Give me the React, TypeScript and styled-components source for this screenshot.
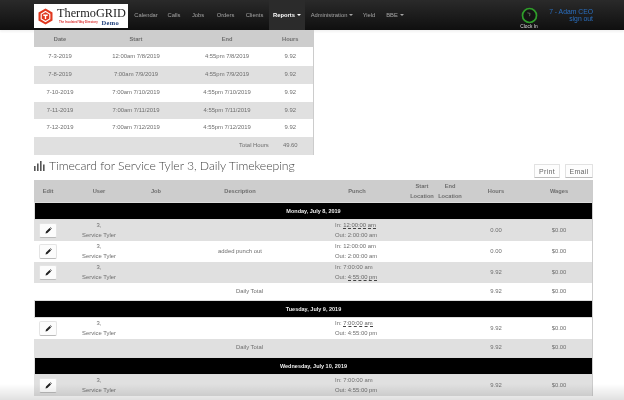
import React from "react";
import styled, { createGlobalStyle } from "styled-components";

const GlobalStyle = createGlobalStyle`
  html, body {
    margin: 0;
    padding: 0;
    height: 100%;
    background: #fff;
    overflow: hidden;
  }
  body {
    font-family: "Liberation Sans", Arial, sans-serif;
    font-size: 6px;
    color: #6e6e6e;
  }
`;

const Page = styled.div`
  position: relative;
  width: 624px;
  height: 400px;
  overflow: hidden;
  filter: blur(0.4px);
`;

// ---------- top bar ----------
const NavBar = styled.header`
  display: flex;
  align-items: stretch;
  height: 30px;
  padding-left: 34px;
  background: linear-gradient(#2a2a2a, #0f0f0f);
  box-shadow: 0 2px 2px rgba(0, 0, 0, 0.05);
`;

const Logo = styled.div`
  display: flex;
  align-items: center;
  gap: 4px;
  width: 94px;
  height: 24px;
  margin-top: 4px;
  padding-left: 4px;
  box-sizing: border-box;
  background: #fff;
`;

const LogoText = styled.div`
  display: flex;
  flex-direction: column;
  width: 66px;
  margin-top: 1px;
`;

const LogoName = styled.span`
  font-family: "Liberation Serif", serif;
  font-size: 12.3px;
  line-height: 12px;
  color: #222;
`;

const LogoSub = styled.div`
  display: flex;
  align-items: center;
  justify-content: space-between;
  padding: 0 4px 0 2px;
  font-size: 2.9px;
  font-weight: bold;
  white-space: nowrap;
  color: #d33;
  line-height: 7px;
`;

const LogoDemo = styled.span`
  font-family: "Liberation Serif", serif;
  font-size: 6.5px;
  font-weight: bold;
  letter-spacing: 0.3px;
  color: #1f3f7a;
`;

const NavLinks = styled.nav`
  display: flex;
  align-items: stretch;
  margin-left: 1px;
`;

const NavLink = styled.a<{ $active?: boolean; $w: number }>`
  display: flex;
  align-items: center;
  justify-content: center;
  width: ${(p) => p.$w}px;
  font-size: 5.8px;
  font-weight: ${(p) => (p.$active ? "bold" : "normal")};
  color: ${(p) => (p.$active ? "#fff" : "#a5a5a5")};
  background: ${(p) => (p.$active ? "#2b2b2b" : "transparent")};
`;

const Caret = styled.span`
  display: inline-block;
  margin-left: 2px;
  border-top: 2px solid currentColor;
  border-left: 2px solid transparent;
  border-right: 2px solid transparent;
`;

const ClockIn = styled.div`
  display: flex;
  flex-direction: column;
  align-items: center;
  width: 24px;
  margin-left: auto;
  padding-top: 7px;
  box-sizing: border-box;
`;

const ClockLabel = styled.span`
  font-size: 4.8px;
  line-height: 5px;
  margin-top: 0;
  white-space: nowrap;
  color: #ddd;
`;

const UserBox = styled.div`
  width: 52px;
  margin-right: 31px;
  padding-top: 9px;
  box-sizing: border-box;
  text-align: right;
  font-size: 6.8px;
  line-height: 6.5px;
  color: #2a6fc0;
`;

// ---------- tables ----------
const Main = styled.main`
  padding: 0 32px 0 34px;
`;

const HoursTable = styled.table`
  width: 279px;
  table-layout: fixed;
  border-collapse: collapse;
  border-right: 1px solid #ccc;
`;

const Row = styled.tr<{ $shade?: "head" | "odd" }>`
  background: ${(p) =>
    p.$shade === "head" ? "#cdcdcd" : p.$shade === "odd" ? "#e0e0e0" : "#fff"};
`;

const HeadCell = styled.th<{ $h: number }>`
  height: ${(p) => p.$h}px;
  padding: 0;
  font-size: 5.7px;
  font-weight: bold;
  line-height: 10px;
  text-align: center;
  color: #6e6e6e;
`;

const Cell = styled.td<{ $h: number; $align?: string }>`
  height: ${(p) => p.$h}px;
  padding: 0;
  font-size: 5.9px;
  line-height: 9.5px;
  text-align: ${(p) => p.$align ?? "center"};
  color: #6e6e6e;
`;

const OffsetLabel = styled(Cell)<{ $indent: number }>`
  padding-left: ${(p) => p.$indent}px;
  white-space: nowrap;
`;

const TitleRow = styled.div`
  display: flex;
  align-items: flex-end;
  justify-content: space-between;
  height: 25px;
`;

const Title = styled.h2`
  display: flex;
  align-items: center;
  gap: 3px;
  margin: 0 0 8px;
  font-family: Lato, sans-serif;
  font-size: 12.2px;
  font-weight: 300;
  line-height: 12px;
  letter-spacing: -0.04px;
  color: #444;
`;

const Actions = styled.div`
  display: flex;
  gap: 5px;
  margin-bottom: 2px;
  margin-right: -1px;
`;

const ActionButton = styled.button<{ $w: number }>`
  width: ${(p) => p.$w}px;
  height: 14px;
  padding: 0;
  font-family: inherit;
  font-size: 7px;
  letter-spacing: 0.3px;
  color: #666;
  background: #fdfdfd;
  border: 1px solid #e2e2e2;
  border-bottom-color: #bbb;
  border-radius: 1px;
`;

const TimeTable = styled.table`
  width: 558px;
  table-layout: fixed;
  border-collapse: separate;
  border-spacing: 0;
  border-right: 1px solid #ccc;
`;

const DayBand = styled.td<{ $h: number }>`
  height: ${(p) => p.$h}px;
  padding: 0;
  font-size: 5.5px;
  font-weight: bold;
  text-align: center;
  color: #eee;
  background: #000;
  border: 1px solid #ddd;
  border-width: 1px 0 1px 1px;
  box-sizing: border-box;
`;

const EditButton = styled.button`
  display: flex;
  align-items: center;
  justify-content: center;
  width: 18px;
  height: 15px;
  margin: 0 auto 0 5px;
  padding: 0;
  background: #fcfcfc;
  border: 1px solid #e4e4e4;
  border-bottom-color: #bbb;
  border-radius: 2px;
`;

const PunchCell = styled(Cell)`
  padding-left: 31px;
`;

const Dotted = styled.span`
  border-bottom: 1px dashed #444;
  color: #666;
`;

const Fade = styled.div`
  position: absolute;
  left: 0;
  right: 0;
  bottom: 0;
  height: 16px;
  background: linear-gradient(rgba(0, 0, 0, 0), rgba(0, 0, 0, 0.12));
  pointer-events: none;
`;

// ---------- icons ----------
const LogoMark = () => (
  <svg width="15" height="17" viewBox="0 0 15 17">
    <path d="M7.5 0.5 L14.5 4.5 V12.5 L7.5 16.5 L0.5 12.5 V4.5 Z" fill="#e0381f" />
    <path d="M7.5 3.5 L11.8 6 V11 L7.5 13.5 L3.2 11 V6 Z" fill="none" stroke="#fff" strokeWidth="1.1" />
    <path d="M5.3 6.6 H9.7 V7.9 H8.2 V11 H6.8 V7.9 H5.3 Z" fill="#fff" />
  </svg>
);

const ClockIcon = () => (
  <svg width="17" height="17" viewBox="0 0 17 17">
    <circle cx="8.5" cy="8.5" r="7" fill="#141414" stroke="#2f9e2a" strokeWidth="1.7" />
    <path d="M8.5 9.2 L9.1 6.4 M9 6.4 L6.4 5.8" fill="none" stroke="#8a9a8a" strokeWidth="0.6" />
  </svg>
);

const BarsIcon = () => (
  <svg width="12" height="10" viewBox="0 0 12 10">
    <g fill="#555">
      <rect x="0" y="5" width="1.6" height="5" />
      <rect x="3" y="2.5" width="1.6" height="7.5" />
      <rect x="6" y="0" width="1.6" height="10" />
      <rect x="9" y="3.5" width="1.6" height="6.5" />
    </g>
  </svg>
);

const PencilIcon = () => (
  <svg width="7" height="7" viewBox="0 0 7 7">
    <path d="M0.5 6.5 L1 4.6 L4.6 1 L6 2.4 L2.4 6 Z M5 0.6 L5.5 0.2 L6.8 1.5 L6.4 2" fill="#222" />
  </svg>
);

// ---------- data ----------
const navItems = [
  { label: "Calendar", w: 34 },
  { label: "Calls", w: 22 },
  { label: "Jobs", w: 26 },
  { label: "Orders", w: 29 },
  { label: "Clients", w: 29 },
  { label: "Reports", w: 36, active: true, caret: true },
  { label: "Administration", w: 54, caret: true },
  { label: "Yield", w: 20 },
  { label: "BBE", w: 32, caret: true },
];

const hoursRows = [
  { h: 19, cells: ["7-3-2019", "12:00am 7/8/2019", "4:55pm 7/8/2019", "9.92"] },
  { h: 18, cells: ["7-8-2019", "7:00am 7/9/2019", "4:55pm 7/9/2019", "9.92"] },
  { h: 18, cells: ["7-10-2019", "7:00am 7/10/2019", "4:55pm 7/10/2019", "9.92"] },
  { h: 17, cells: ["7-11-2019", "7:00am 7/11/2019", "4:55pm 7/11/2019", "9.92"] },
  { h: 18, cells: ["7-12-2019", "7:00am 7/12/2019", "4:55pm 7/12/2019", "9.92"] },
];

const hoursCols = [52, 100, 82, 45];
const timeCols = [28, 74, 40, 128, 106, 24, 32, 60, 66];

type Entry =
  | { kind: "day"; label: string; h: number }
  | { kind: "total"; odd?: boolean; hours: string; h: number }
  | { kind: "punch"; odd?: boolean; note?: string; inTime: string; outTime: string; inDash?: boolean; outDash?: boolean; hours: string; h: number };

const entries: Entry[] = [
  { kind: "day", label: "Monday, July 8, 2019", h: 18 },
  { kind: "punch", odd: true, inTime: "12:00:00 am", outTime: "2:00:00 am", inDash: true, hours: "0.00", h: 21 },
  { kind: "punch", note: "added punch out", inTime: "12:00:00 am", outTime: "2:00:00 am", hours: "0.00", h: 21 },
  { kind: "punch", odd: true, inTime: "7:00:00 am", outTime: "4:55:00 pm", outDash: true, hours: "9.92", h: 21 },
  { kind: "total", hours: "9.92", h: 17 },
  { kind: "day", label: "Tuesday, July 9, 2019", h: 18 },
  { kind: "punch", inTime: "7:00:00 am", outTime: "4:55:00 pm", inDash: true, hours: "9.92", h: 21 },
  { kind: "total", odd: true, hours: "9.92", h: 18 },
  { kind: "day", label: "Wednesday, July 10, 2019", h: 18 },
  { kind: "punch", odd: true, inTime: "7:00:00 am", outTime: "4:55:00 pm", hours: "9.92", h: 21 },
];

const Cols = ({ widths }: { widths: number[] }) => (
  <colgroup>
    {widths.map((w, i) => (
      <col key={i} width={w} />
    ))}
  </colgroup>
);

const App: React.FC = () => (
  <Page>
    <GlobalStyle />
    <NavBar>
      <Logo>
        <LogoMark />
        <LogoText>
          <LogoName>ThermoGRID</LogoName>
          <LogoSub>
            <span>The Insulated Way Directory</span>
            <LogoDemo>Demo</LogoDemo>
          </LogoSub>
        </LogoText>
      </Logo>
      <NavLinks>
        {navItems.map((n) => (
          <NavLink key={n.label} $w={n.w} $active={n.active}>
            {n.label}
            {n.caret && <Caret />}
          </NavLink>
        ))}
      </NavLinks>
      <ClockIn>
        <ClockIcon />
        <ClockLabel>Clock In</ClockLabel>
      </ClockIn>
      <UserBox>
        7 - Adam CEO
        <br />
        sign out
      </UserBox>
    </NavBar>

    <Main>
      <HoursTable>
        <Cols widths={hoursCols} />
        <thead>
          <Row $shade="head">
            <HeadCell $h={17}>Date</HeadCell>
            <HeadCell $h={17}>Start</HeadCell>
            <HeadCell $h={17}>End</HeadCell>
            <HeadCell $h={17}>Hours</HeadCell>
          </Row>
        </thead>
        <tbody>
          {hoursRows.map((r, i) => (
            <Row key={r.cells[0]} $shade={i % 2 ? "odd" : undefined}>
              {r.cells.map((c) => (
                <Cell key={c} $h={r.h}>
                  {c}
                </Cell>
              ))}
            </Row>
          ))}
          <Row $shade="odd">
            <OffsetLabel $h={18} colSpan={3} $align="left" $indent={205}>
              Total Hours
            </OffsetLabel>
            <Cell $h={18}>49.60</Cell>
          </Row>
        </tbody>
      </HoursTable>

      <TitleRow>
        <Title>
          <BarsIcon />
          Timecard for Service Tyler 3, Daily Timekeeping
        </Title>
        <Actions>
          <ActionButton $w={26}>Print</ActionButton>
          <ActionButton $w={28}>Email</ActionButton>
        </Actions>
      </TitleRow>

      <TimeTable>
        <Cols widths={timeCols} />
        <thead>
          <Row $shade="head">
            <HeadCell $h={22}>Edit</HeadCell>
            <HeadCell $h={22}>User</HeadCell>
            <HeadCell $h={22}>Job</HeadCell>
            <HeadCell $h={22}>Description</HeadCell>
            <HeadCell $h={22}>Punch</HeadCell>
            <HeadCell $h={22}>Start Location</HeadCell>
            <HeadCell $h={22}>End Location</HeadCell>
            <HeadCell $h={22}>Hours</HeadCell>
            <HeadCell $h={22}>Wages</HeadCell>
          </Row>
        </thead>
        <tbody>
          {entries.map((e, i) => {
            if (e.kind === "day") {
              return (
                <tr key={i}>
                  <DayBand $h={e.h} colSpan={9}>
                    {e.label}
                  </DayBand>
                </tr>
              );
            }
            if (e.kind === "total") {
              return (
                <Row key={i} $shade={e.odd ? "odd" : undefined}>
                  <Cell $h={e.h} colSpan={3} />
                  <OffsetLabel $h={e.h} $align="left" $indent={60}>
                    Daily Total
                  </OffsetLabel>
                  <Cell $h={e.h} colSpan={3} />
                  <Cell $h={e.h}>{e.hours}</Cell>
                  <Cell $h={e.h}>$0.00</Cell>
                </Row>
              );
            }
            return (
              <Row key={i} $shade={e.odd ? "odd" : undefined}>
                <Cell $h={e.h}>
                  <EditButton>
                    <PencilIcon />
                  </EditButton>
                </Cell>
                <Cell $h={e.h}>
                  3,
                  <br />
                  Service Tyler
                </Cell>
                <Cell $h={e.h} />
                <Cell $h={e.h}>{e.note}</Cell>
                <PunchCell $h={e.h} $align="left" colSpan={3}>
                  In: {e.inDash ? <Dotted>{e.inTime}</Dotted> : e.inTime}
                  <br />
                  Out: {e.outDash ? <Dotted>{e.outTime}</Dotted> : e.outTime}
                </PunchCell>
                <Cell $h={e.h}>{e.hours}</Cell>
                <Cell $h={e.h}>$0.00</Cell>
              </Row>
            );
          })}
        </tbody>
      </TimeTable>
    </Main>
    <Fade />
  </Page>
);

export default App;
